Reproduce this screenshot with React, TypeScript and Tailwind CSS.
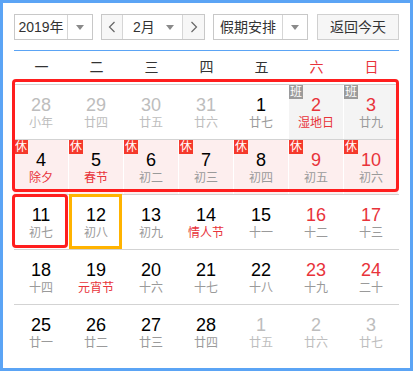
import React from "react";

type Cell = {
  n: number;
  l: string;
  prev?: boolean;
  redNum?: boolean;
  redLunar?: boolean;
  bg?: "gray" | "pink";
  badge?: "班" | "休";
  sel?: "red" | "yellow";
};

const RED = "text-[#e8333a]";

const rows: Cell[][] = [
  [
    { n: 28, l: "小年", prev: true },
    { n: 29, l: "廿四", prev: true },
    { n: 30, l: "廿五", prev: true },
    { n: 31, l: "廿六", prev: true },
    { n: 1, l: "廿七" },
    { n: 2, l: "湿地日", redNum: true, redLunar: true, bg: "gray", badge: "班" },
    { n: 3, l: "廿九", redNum: true, bg: "gray", badge: "班" },
  ],
  [
    { n: 4, l: "除夕", redLunar: true, bg: "pink", badge: "休" },
    { n: 5, l: "春节", redLunar: true, bg: "pink", badge: "休" },
    { n: 6, l: "初二", bg: "pink", badge: "休" },
    { n: 7, l: "初三", bg: "pink", badge: "休" },
    { n: 8, l: "初四", bg: "pink", badge: "休" },
    { n: 9, l: "初五", redNum: true, bg: "pink", badge: "休" },
    { n: 10, l: "初六", redNum: true, bg: "pink", badge: "休" },
  ],
  [
    { n: 11, l: "初七", sel: "red" },
    { n: 12, l: "初八", sel: "yellow" },
    { n: 13, l: "初九" },
    { n: 14, l: "情人节", redLunar: true },
    { n: 15, l: "十一" },
    { n: 16, l: "十二", redNum: true },
    { n: 17, l: "十三", redNum: true },
  ],
  [
    { n: 18, l: "十四" },
    { n: 19, l: "元宵节", redLunar: true },
    { n: 20, l: "十六" },
    { n: 21, l: "十七" },
    { n: 22, l: "十八" },
    { n: 23, l: "十九", redNum: true },
    { n: 24, l: "二十", redNum: true },
  ],
  [
    { n: 25, l: "廿一" },
    { n: 26, l: "廿二" },
    { n: 27, l: "廿三" },
    { n: 28, l: "廿四" },
    { n: 1, l: "廿五", prev: true },
    { n: 2, l: "廿六", prev: true },
    { n: 3, l: "廿七", prev: true },
  ],
];

function Tri() {
  return (
    <svg width="8" height="5" viewBox="0 0 8 5">
      <path d="M0 0 L8 0 L4 5 Z" fill="#8a8a8a" />
    </svg>
  );
}

function Chevron({ dir }: { dir: "l" | "r" }) {
  return (
    <svg width="8" height="12" viewBox="0 0 8 12">
      <path
        d={dir === "l" ? "M6.5 1 L1.5 6 L6.5 11" : "M1.5 1 L6.5 6 L1.5 11"}
        fill="none"
        stroke="#666"
        strokeWidth="1.2"
      />
    </svg>
  );
}

function DayCell({ c }: { c: Cell }) {
  const bg =
    c.bg === "gray" ? "bg-[#f4f4f4]" : c.bg === "pink" ? "bg-[#fdeeee]" : "bg-white";
  const numColor = c.prev
    ? "text-[#bdbdbd]"
    : c.redNum
    ? RED
    : "text-black";
  const lunarColor = c.prev
    ? "text-[#bdbdbd]"
    : c.redLunar
    ? RED
    : "text-[#9a9a9a]";
  return (
    <div className={`relative h-full border-r border-white ${bg}`}>
      {c.badge && (
        <div
          className={`absolute left-0 top-0 w-[14px] h-[14px] text-[12px] leading-[14px] text-white text-center ${
            c.badge === "班" ? "bg-[#9b9b9b]" : "bg-[#f5392b]"
          }`}
        >
          {c.badge}
        </div>
      )}
      {c.sel === "red" && (
        <div className="absolute left-[-2px] top-[-1px] w-[56px] h-[54px] border-[3px] border-[#ff1e1e] rounded-[4px] pointer-events-none" />
      )}
      {c.sel === "yellow" && (
        <div className="absolute left-0 top-[-1px] w-[53px] h-[55px] border-[3px] border-[#ffb300] pointer-events-none" />
      )}
      <div className="flex flex-col items-center pt-[10px]">
        <div className={`text-[18px] leading-[20px] ${numColor}`}>{c.n}</div>
        <div className={`text-[12px] leading-[16px] ${lunarColor}`}>{c.l}</div>
      </div>
    </div>
  );
}

export default function App() {
  const week = ["一", "二", "三", "四", "五", "六", "日"];
  return (
    <div
      className="w-[413px] h-[371px] border-[3px] border-[#5ba4f5] bg-white px-[11px] pt-[11px] text-[#333]"
      style={{ fontFamily: '"Liberation Sans", "Noto Sans CJK SC", sans-serif' }}
    >
      {/* header */}
      <div className="flex h-[26px] text-[14px] text-[#333]">
        <div className="flex w-[79px] border border-[#c8c8c8] bg-white">
          <div className="flex-1 flex items-center justify-center border-r border-[#d6d6d6]">2019年</div>
          <div className="w-[24px] flex items-center justify-center">
            <Tri />
          </div>
        </div>
        <div className="ml-[8px] flex w-[104px] border border-[#c8c8c8]">
          <div className="w-[21px] flex items-center justify-center bg-[#f7f7f7] border-r border-[#d6d6d6]">
            <Chevron dir="l" />
          </div>
          <div className="w-[60px] flex items-center bg-white border-r border-[#d6d6d6]">
            <span className="ml-[10px]">2月</span>
            <span className="ml-auto mr-[8px] flex">
              <Tri />
            </span>
          </div>
          <div className="flex-1 flex items-center justify-center bg-[#f7f7f7]">
            <Chevron dir="r" />
          </div>
        </div>
        <div className="ml-[8px] flex w-[95px] border border-[#c8c8c8] bg-white">
          <div className="flex-1 flex items-center justify-center border-r border-[#d6d6d6]">假期安排</div>
          <div className="w-[24px] flex items-center justify-center">
            <Tri />
          </div>
        </div>
        <div className="ml-[9px] w-[82px] flex items-center justify-center border border-[#d0d0d0] bg-[#f6f6f6]">
          返回今天
        </div>
      </div>

      <div className="mt-[10px] h-px bg-[#5ba4f5]" />

      <div className="grid grid-cols-7 h-[33px] items-center text-[14px]">
        {week.map((w, i) => (
          <div key={w} className={`text-center ${i >= 5 ? RED : "text-[#333]"}`}>
            {w}
          </div>
        ))}
      </div>

      <div className="relative">
        {rows.map((r, ri) => (
          <div key={ri} className="grid grid-cols-7 h-[55px] border-t border-[#d3d3d3]">
            {r.map((c, ci) => (
              <DayCell key={ci} c={c} />
            ))}
          </div>
        ))}
        <div className="absolute left-[-2px] top-[-5px] w-[387px] h-[113px] border-[3px] border-[#ff1e1e] rounded-[4px] pointer-events-none z-10" />
      </div>
    </div>
  );
}
